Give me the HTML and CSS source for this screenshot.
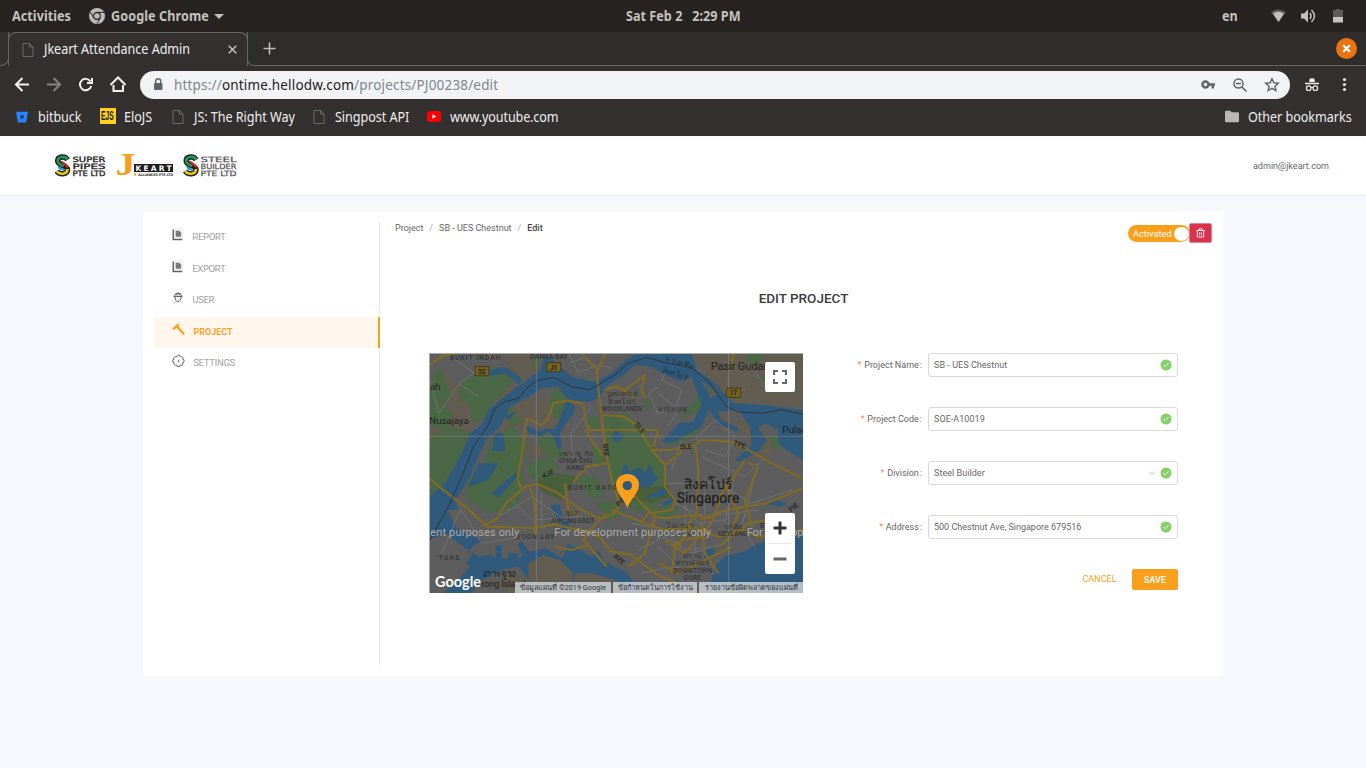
FILE: index.html
```html
<!DOCTYPE html>
<html lang="en">
<head>
<meta charset="utf-8">
<title>Jkeart Attendance Admin</title>
<link rel="stylesheet" href="styles.css">
</head>
<body>
<svg width="0" height="0" class="defs" aria-hidden="true">
  <symbol id="page" viewBox="0 0 12 16"><path d="M1 1.500h6.500L11 5v9.500H1zM7.500 1.500V5H11" fill="none" stroke="#6b6967"/></symbol>
  <symbol id="ok" viewBox="0 0 12 12"><circle cx="6" cy="6" r="5.500" fill="#87d068"/><path d="M3.600 6.100l1.700 1.700 3.100-3.500" fill="none" stroke="#fff"/></symbol>
  <symbol id="doc" viewBox="0 0 12 14"><path d="M1.300 1.500v10h9" fill="none" stroke="#666" stroke-width="1.600"/><path d="M3.500.8h5L10.500 2.800v6.800H3.500z" fill="#fff" stroke="#ddd" stroke-width=".7"/><path d="M4.200 3h3l1.500 1.500v3.800H4.200zM4.500 5.300h4M4.500 6.800h4" fill="#888" stroke="#666" stroke-width=".7"/></symbol>
  <symbol id="snake" viewBox="0 0 18 24"><path d="M13.500 6.800C11 2.300 3.700 3.500 3.700 8c0 5 9.800 4 9.800 8.500 0 5.300-8 5.500-10.800 1.500" fill="none" stroke="#222" stroke-width="5.500"/><path d="M13.500 6.500C11 2.300 3.700 3.500 3.700 8c0 3 3 4 6 5" fill="none" stroke="#1b9a59" stroke-width="2.600"/><path d="M7.500 8c1 2.500 5.500 2.500 6 6.500" fill="none" stroke="#df2525" stroke-width="2"/><path d="M13.500 16c0 5.800-8 6-10.800 2" fill="none" stroke="#e4c91d" stroke-width="2.600"/><path d="M4.500 13.500c1 3 3.500 3 5.500 3" fill="none" stroke="#168fc4" stroke-width="2"/></symbol>
</svg>

<div class="topbar">
  <span class="t-act"><span class="narrow">Activities</span></span>
  <svg class="t-chrome" viewBox="0 0 16 16"><circle cx="8" cy="8" r="8" fill="#bdbbb8"/><circle cx="8" cy="8" r="3.900" fill="#272320"/><circle cx="8" cy="8" r="2.800" fill="#bdbbb8"/><path d="M8 4.300h7M4.800 10L1.400 4.200M11.200 10L8 15.600" stroke="#272320" stroke-width="1"/></svg>
  <span class="t-name"><span class="narrow">Google Chrome</span></span><span class="caret"></span>
  <span class="t-date"><span class="narrow">Sat Feb 2 &nbsp; 2:29 PM</span></span>
  <span class="t-en"><span class="narrow">en</span></span>
  <svg class="t-status" width="76" height="16" viewBox="0 0 76 16"><path d="M1 4Q8-1 16 4L8.500 14z" fill="#5e5b58"/><path d="M3 5.500Q8 2 14 5.500L8.500 14z" fill="#c4c2bf"/><path d="M31 5.500h3l4-4v13l-4-4h-3z" fill="#c4c2bf"/><path d="M40 5q2 3 0 6M41.500 2q6 6 0 12" fill="none" stroke="#c4c2bf" stroke-width="1.500"/><path d="M63 2h3V1h4v1h3v8H63z" fill="#5e5b58"/><path d="M63 9h10v5.500H63z" fill="#c4c2bf"/></svg>
</div>

<div class="tabs">
  <div class="tabline-l"></div>
  <div class="tab"><svg width="12" height="16"><use href="#page"/></svg><span class="tab-title"><span class="narrow">Jkeart Attendance Admin</span></span>
    <svg class="tab-x" width="9" height="9"><path d="M.7.7l7.600 7.600M8.300.7L.7 8.300" stroke="#bbb" stroke-width="1.600"/></svg></div>
  <div class="tabline"><svg width="13" height="13"><path d="M6.500.5v12M.5 6.500h12" stroke="#bbb" stroke-width="1.600"/></svg>
    <svg class="winclose" width="21" height="21"><circle cx="10.500" cy="10.500" r="10.500" fill="#e97411"/><path d="M7.200 7.200l6.600 6.600M13.800 7.200l-6.600 6.600" stroke="#fff" stroke-width="2.200"/></svg></div>
</div>

<div class="toolbar">
  <svg width="126" height="28" viewBox="0 0 126 28" fill="none" stroke="#f3f3f3" stroke-width="2"><path d="M29 13.500H16M22.500 7l-6.500 6.500 6.500 6.500"/><path d="M47 13.500h13M53.500 7l6.500 6.500-6.500 6.500" stroke="#858381"/><path d="M90.500 10.500a5.700 5.700 0 1 0 .7 4.500M92 7v5h-5"/><path d="M113.500 14V20h9.500v-6M110.500 14l7.500-7.500 7.500 7.500"/></svg>
  <div class="omni">
    <svg width="10" height="13"><rect x="1" y="5" width="8.500" height="7" rx="1" fill="#5f6368"/><path d="M2.700 5.500V3.300a2.500 2.500 0 0 1 5 0v2.200" fill="none" stroke="#5f6368" stroke-width="1.400"/></svg>
    <span class="url"><span class="narrow">https://<b>ontime.hellodw.com</b>/projects/PJ00238/edit</span></span>
    <svg class="omni-icons" width="80" height="18" viewBox="0 0 80 18" fill="none" stroke="#5f6368"><circle cx="5.500" cy="8.500" r="3" stroke-width="2.400"/><path d="M8.500 8.500H15M12.800 8.500v4" stroke-width="2.400"/><circle cx="38.500" cy="7.500" r="4.500" stroke-width="1.500"/><path d="M42 11l4.500 4.500M36 7.500h5" stroke-width="1.600"/><path d="M72 2.700l1.800 4.100 4.500.4-3.400 3 1 4.400-3.900-2.300-3.900 2.300 1-4.400-3.400-3 4.500-.4z" stroke-width="1.400"/></svg>
  </div>
  <svg class="incog" width="44" height="16" viewBox="0 0 44 16"><path d="M4 5L5 1l2 .7L9 1l1 4zM0 5.700h14v1.500H0z" fill="#eee"/><circle cx="3.700" cy="11.200" r="2.300" fill="none" stroke="#eee" stroke-width="1.200"/><circle cx="10.300" cy="11.200" r="2.300" fill="none" stroke="#eee" stroke-width="1.200"/><path d="M6 10.500h2" stroke="#eee"/><circle cx="39.500" cy="2.500" r="1.600" fill="#eee"/><circle cx="39.500" cy="7.500" r="1.600" fill="#eee"/><circle cx="39.500" cy="12.500" r="1.600" fill="#eee"/></svg>
</div>

<div class="bookmarks">
  <svg class="bm-bit" width="12" height="12"><path d="M0 .7h12l-1.800 10.800H1.800z" fill="#2684ff"/><path d="M4 4.300h4l-.6 3.500H4.600z" fill="#243b66"/></svg><span class="b1"><span class="narrow">bitbuck</span></span>
  <span class="ejs"><span>EJS</span></span><span class="b2"><span class="narrow">EloJS</span></span>
  <svg class="p3" width="12" height="16"><use href="#page"/></svg><span class="b3"><span class="narrow">JS: The Right Way</span></span>
  <svg class="p4" width="12" height="16"><use href="#page"/></svg><span class="b4"><span class="narrow">Singpost API</span></span>
  <svg class="p5" width="14" height="11"><rect width="14" height="11" rx="3" fill="#f00"/><path d="M5.500 3.300v4.400L9.300 5.500z" fill="#fff"/></svg><span class="b5"><span class="narrow">www.youtube.com</span></span>
  <span class="other"><svg width="14" height="13"><path d="M0 2q0-1.300 1.300-1.300h4L6.700 2.300h6Q14 2.300 14 3.600V11q0 1.300-1.300 1.300H1.300Q0 12.300 0 11z" fill="#bab8b6"/></svg><span class="b6"><span class="narrow">Other bookmarks</span></span></span>
</div>

<header class="header">
  <svg class="logos" width="184" height="28" viewBox="0 0 184 28" font-family="DejaVu Sans">
    <use href="#snake" x="-1" y="1" width="18" height="24"/>
    <g font-size="7.200" fill="#2c2c2c" stroke="#2c2c2c" stroke-width=".35"><text x="17.500" y="10" textLength="33" lengthAdjust="spacingAndGlyphs">SUPER</text><text x="17.500" y="17" textLength="33" lengthAdjust="spacingAndGlyphs">PIPES</text><text x="17.500" y="24" textLength="33" lengthAdjust="spacingAndGlyphs">PTE LTD</text></g>
    <text x="60.500" y="23" font-family="Liberation Serif" font-weight="bold" font-size="31" fill="#f99d1c" textLength="20" lengthAdjust="spacingAndGlyphs">J</text>
    <path d="M79 12h39v8H79z" fill="#1d1d1d"/><text x="80.500" y="18.800" font-size="7.500" font-weight="bold" fill="#fff" textLength="36">KEART</text>
    <circle cx="80" cy="22.500" r="1.300" fill="#f99d1c"/><text x="83" y="24" font-size="3.400" font-weight="bold" fill="#333" textLength="35">ALLIANCES PTE LTD</text>
    <use href="#snake" x="127.500" y="1" width="18" height="24"/>
    <g font-size="7.200" fill="#555" stroke="#555" stroke-width=".25"><text x="145.500" y="10" textLength="36" lengthAdjust="spacingAndGlyphs">STEEL</text><text x="145.500" y="17" textLength="36" lengthAdjust="spacingAndGlyphs">BUILDER</text><text x="145.500" y="24" textLength="36" lengthAdjust="spacingAndGlyphs">PTE LTD</text></g>
  </svg>
  <span>admin@jkeart.com</span>
</header>

<main class="card">
  <nav class="menu">
    <div class="item"><svg width="12" height="14"><use href="#doc"/></svg>REPORT</div>
    <div class="item"><svg width="12" height="14"><use href="#doc"/></svg>EXPORT</div>
    <div class="item"><svg width="12" height="14" fill="none" stroke="#666" stroke-width="1"><path d="M1.500 5.500h9M2.500 5.200Q2.500 2 6 2t3.500 3.200M6 1.500v3M4.300 2.500v2M7.700 2.500v2M3 6q0 4.500 3 4.500T9 6"/><path d="M1 12.500l3-2M11 12.500l-3-2" stroke="#ccc"/></svg>USER</div>
    <div class="item active"><svg width="13" height="14"><path d="M.3 5.500L6 .5l1.700.9L6.300 3l6.500 7.500-1.500 1.500-6.600-7.300L2 7z" fill="#faa01e"/></svg>PROJECT</div>
    <div class="item"><svg width="13" height="14" fill="none" stroke="#666"><path d="M5.300 1.500L6.500.9l1.200.6.5 1.300 1.500-.5 1.300 1.500-.5 1.200 1.500.8v2.200l-1.500.7.5 1.500L9.500 11.500l-1.300-.5-.5 1.500H5.300l-.5-1.500-1.500.5-1.500-1.500.5-1.300-1.500-.7V5.800L2.300 5l-.5-1.200 1.500-1.500 1.500.5z"/><circle cx="6.500" cy="7" r=".6"/></svg>SETTINGS</div>
  </nav>
  <section class="content">
    <div class="crumbrow">
      <div class="crumbs"><span>Project</span><i>/</i><span>SB - UES Chestnut</span><i>/</i><strong>Edit</strong></div>
      <div class="actions"><span class="switch">Activated<em></em></span>
        <button class="trash"><svg width="9" height="10" fill="none" stroke="#fff" stroke-width=".9"><path d="M.3 2.500h8.400M3 2.300V.8h3v1.500M1.300 2.800V9h6.400V2.800M3.600 4.300v3M5.400 4.300v3"/></svg></button></div>
    </div>
    <h1>EDIT PROJECT</h1>
    <div class="body">
      <div class="map">
        <svg class="mapart" width="374" height="240" viewBox="12 9 1122 720" preserveAspectRatio="none">
          <rect width="1140" height="740" fill="#5d5d5d"/>
          <g fill="#625c51">
            <path d="M12 100L50 60l90 90 20 60-60 80-88 60zM190 130l60-30 30 20-60 40zM230 12h90l20 50-40 30-50-40zM260 150l60 0 100-20 30 20-30 90-40-50-80 20-50 90-40-10zM340 180l50-30 30 70-60 20zM800 12h334v160l-150-15-70 10-60-80zM860 200l30-20 40 50-20 20zM920 220l60-10 70 70-10 50-50-20-30-60zM300 290l60-10 20 30-60 20zM160 12h70l-20 30z"/>
          </g>
          <g fill="#4a6846">
            <path d="M12 90l30-40 20 50 20 40-30 30 30 20-20 50-50-10zM110 90l50-20 40-20 50 5 20 30-30 40-40 40-10 40-50 10-10-60-30 0zM12 260l60-30 70 20-20 50-40 80-70 60zM200 260l60-30 50 50-20 70-60 50-60-30zM220 170l30-15 40 60-30 20zM380 120l40 0 20 30-40 60-30-30zM310 340l60-20 30 30-50 50-40-20zM470 90l15-15 12 25-15 5zM490 200l30 0 5 50-35-20zM540 200l60-15 60 60 30 50 30 60 10 60-40 60-50 10-50-30-30-40-20-110zM650 160l40-20-20 40zM330 250l60 10 30 60-50 10zM670 480l80-20 10 30-70 20zM720 260l60-15 60-30-30 40-80 35zM760 210l50-60 20-40 30 10-20 50zM960 12h60l-30 35-20-10zM1000 90l60-40v70zM1030 260l25-5 10 40-20 5zM1070 200l60 10v40l-60-30zM900 620l60-10 60-40 50-10-40 30-80 30-30 20z"/>
            <path d="M130 380l80-40 80 10 10 60-30 60-80 20-70-50zM500 290l30 5 10 40-30 10zM510 460l50-10 40 40-50 20zM450 390l50-20 40 50-30 30zM12 370l70-10-70 70zM320 20l30 10-20 30z"/>
          </g>
          <path fill="#47603a" d="M330 400l70-30 55 10-25 40-20 30-50-20zM640 390l40 20 50-5 10 35-60 20-60-10z"/>
          <g fill="#305a7c">
            <path d="M12 520L12 440 60 400 110 310 135 250 170 225 190 180 225 150 270 115 300 95 345 60 362 12 400 45 440 80 510 95 560 70 610 25 640 9H800L815 60 870 100 925 160 1010 165 1134 180V330L1085 300 1060 280 1060 240 1020 220 985 245 940 180 880 185 830 160 880 130 840 100 800 80 770 95 720 75 680 50 630 45 590 80 540 110 525 145 490 155 430 150 400 110 350 115 310 140 255 170 225 230 190 260 160 320 130 390 90 450 100 480 60 480z"/>
            <path d="M190 60l50-10 50 35-5 20-45-35-45 8zM225 185l20 10 25-10-15 25-25-15zM205 250l30 15v40l-30-5zM300 225l45 20 25-5-20 20-40-10zM425 150l25 20-5 25-20 20-20 35 5 40-8 10-25-50-35-10 50-5 15-35zM210 250h25l5 50-40 5zM160 340l60 0-30 50-60 20zM200 430l70-60 10 8-60 65zM570 240l30 20-25 20 20 15-35-30zM590 370l10-30 15 25 30-15 15 20 15-30 10 30 15 15-30 30-50-10zM800 80l25 10 25 35 10 35-30 70-45 25-45 25-30-5 50-55 45-5 25-50zM860 150l30 60 50 25 0 10-60-20-30-50zM975 245l10-35 40 60-20 30-60 35-15-5 50-45zM375 465h30l5 30 25 30-20 20-25-55zM660 445l50-30 20 10-20 15zM710 460l35-20 5 10-30 20zM840 595l25-5 5 30-35 10zM1015 460l40-10 30 10-20 10z"/>
            <path d="M12 500l50 0 30 40 80 30-40 30 30 20 50-10-5-20 20-5 20 25 40 0-10-30 15-5 20 30 50-10 50 30 80 30 70 40 50 50 10 14H350l-10-60-30-10-30-40-50 10-60 30-40 50H40l60-50 35-40-60-30-20-60-43-20z"/>
            <path d="M12 450l50 20 30 60 40 30-10 20-60-30-50 20z"/>
            <path d="M850 729l20-80 30-30 60-15 40-25 100-20 34-5v175z"/>
            <path d="M430 580l70 40 20-20 20 35 60 30 40 45-30 19h-90l-40-60-70-40z"/>
          </g>
          <g fill="#625c51"><path d="M310 640l45-25 50 15 40 40-10 59H260l-60-19 40-30 30-10 40 20zM450 670l50 0 70 20 30 30-10 9h-150z"/></g>
          <g fill="#5d5d5d"><path d="M200 580h12v40h-12zM230 590h20v35h-20zM280 585l12 30-12 15zM12 580l50-30 40 30 40 30-30 50-40-10-50 50z"/></g>
          <g fill="none" stroke="#717171" stroke-width="3">
            <path d="M90 30l60 40M12 80l30 110 60-90 60-40M190 12l20 30M100 100l60 40M430 9l30 60 60-25 40 10M430 40l60-20M500 170l-60 80v70l60 60M700 110l-30 20 30 60 50-10 20-60-60-30 10-20M700 130l60 50-30 50M740 360l30-90M810 270l60-60 60 50-30 60-60-20M910 9v110h50M970 40l60 80M830 320l130 60 60-60M720 400h160l100 60 120-40M750 460l90 40 160-20M780 400v130M840 380v140M930 370l-30 150M1000 340l-50 190 40 60"/>
            <path d="M50 610l60-140M110 480l60 100 130-20M220 500l100-60 100 70M260 450l60 60 150-10M350 430v100l80-20M620 520l100 20 60 60 80-10M640 600l80-40 80 50 100-30M650 670l90-20 130 20M810 550v80M780 470l40 50 80-10M700 590l60 60"/>
          </g>
          <g fill="none" stroke="#806a25" stroke-width="6.500" stroke-linejoin="round">
            <path d="M12 45l45-30h30M470 12l45 45 5 60 15 130 10 70 20 90 20 60-20 25-40 15-60-30-70-50-60-25-30 5-60 50-30 50-40 20M305 205l-12 90-15 95 10 25M305 205l45 20 20-20 15-45 45-8 45 10 8 60 15 20M520 60l20-50M485 240l215 0M535 195l60 5 40 25 45 75 40 45v65l30 40-10 30-70 10-25 30M680 300h60l70-15 20-15 90 5 60 30 60 35 90 45M540 120l30-10 30 10 60-45-10 45 10 25M570 105l60 40M700 240l-15 50M480 240l55 80M720 345l50-40M810 285l10 70-5 130-40 60M990 345l-20-5M1000 350l-40 100 20 80M1134 415l-110 45-120 20-80 30M925 12l-10 50"/>
            <path d="M12 385l75 60 40 30 60 55 140 4 60-10 100 20 40 20 30 40 60 10 80 60 110 50 60 10 90-20 60 20M445 395l40-45 60-10M560 480l100 40 60 20 80-10 80 30 70-20 50 20 134-20M590 400l50 50 50 50 30 5 80-10 60 10M420 400l10 80 30 15M545 490l-50 50-20 30 70 80M330 560v-100l-15-50M390 590l50 10 50-15M690 500l-30 110-50 40M800 530l-50 70-10 70M830 520l10 90 40 60M740 590l30-20 60-10 40-60 20-70 70-100M880 590l90-70 60-10M700 640l60 30 60-30 100-50M720 570l60 40 40-50M900 400l40 90-20 50"/>
          </g>
          <path fill="none" stroke="#2d363d" stroke-width="3" d="M12 575L75 460 112 375 145 290 190 225 210 175 240 155 280 145 305 115 340 90 388 83 440 110 495 119 570 75 610 40 665 22 720 38 800 53 850 95 905 170 940 186 1010 190 1070 179 1134 193"/>
          <path d="M334 9V729M911 9V729M12 259H1134" stroke="#808080" stroke-width="2"/>
          <g fill="#74621f" stroke="#493d16" stroke-width="3"><path d="M150 50h42v27h-42zM365 38h42v27h-42zM904 115h43v27h-43z"/></g>
          <g class="roadno"><text x="171" y="71">52</text><text x="386" y="59">J1</text><text x="925" y="136">17</text></g>
          <g class="places">
            <text x="75" y="30" textLength="151">BUKIT INDAH</text><text x="316" y="28" textLength="112">DANGA BAY</text>
            <text x="530" y="182" textLength="122">WOODLANDS</text><text x="700" y="187" textLength="86">YISHUN</text>
            <text x="402" y="338" textLength="101">CHOA CHU</text><text x="425" y="360" textLength="54">KANG</text><text x="402" y="318" textLength="101" lengthAdjust="spacingAndGlyphs">เขา ชู กัง</text>
            <text x="543" y="139" textLength="95" lengthAdjust="spacingAndGlyphs">วูดแลนด์</text><text x="548" y="163" textLength="86" lengthAdjust="spacingAndGlyphs">สิงคโปร์</text>
            <text x="429" y="420" textLength="163">BUKIT BATOK</text><text x="376" y="518" textLength="132">JURONG EAST</text><text x="422" y="495">จูรง</text>
            <text x="272" y="567" textLength="116">BOON LAY</text><text x="41" y="630" textLength="62">TUAS</text>
            <text x="723" y="535" textLength="82" lengthAdjust="spacingAndGlyphs">โนเวนา</text><text x="738" y="558" class="sm">NOVENA</text><text x="900" y="537" textLength="52" lengthAdjust="spacingAndGlyphs">เกลัง</text><text x="880" y="558" textLength="88">GEYLANG</text><text x="1005" y="534">B</text>
            <text x="773" y="625" textLength="58" lengthAdjust="spacingAndGlyphs">ดาวน์</text><text x="749" y="646" textLength="107" lengthAdjust="spacingAndGlyphs">ทาวน์ดอร์</text><text x="744" y="668" textLength="117">DOWNTOWN</text><text x="776" y="689" textLength="52">CORE</text>
          </g>
          <g class="roads"><text x="765" y="298" transform="rotate(-3 765 298)">SLE</text><text x="924" y="285" transform="rotate(18 924 285)">TPE</text><text x="628" y="223" transform="rotate(55 628 223)">SLE</text><text x="534" y="282" transform="rotate(85 534 282)">BKE</text><text x="356" y="386" transform="rotate(-27 356 386)">KJE</text><text x="563" y="621" transform="rotate(40 563 621)">AYE</text><text x="1098" y="487" transform="rotate(-38 1098 487)">PIE</text><text x="582" y="470" transform="rotate(-45 582 470)">PIE</text></g>
          <g class="strait"><text x="720" y="30" transform="rotate(20 720 30)">มาเลเซีย</text><text x="712" y="65" transform="rotate(20 712 65)">สิงคโปร์</text></g>
          <g class="towns"><text x="15" y="120">ah</text><text x="13" y="223" textLength="118">Nusajaya</text><text x="857" y="61" textLength="195" class="big">Pasir Gudang</text><text x="1072" y="248">Pulau</text><text x="173" y="682" textLength="101">เกาะจูรง</text><text x="168" y="710" textLength="134">rong Island</text></g>
          <g class="city"><text x="776" y="416" textLength="146" lengthAdjust="spacingAndGlyphs">สิงคโปร์</text><text x="755" y="459" textLength="188" lengthAdjust="spacingAndGlyphs">Singapore</text></g>
          <g class="dev"><text x="16" y="558" textLength="267">ent purposes only</text><text x="388" y="558" textLength="470">For development purposes only</text><text x="965" y="558">For development purposes only</text></g>
          <text x="30" y="711" class="google" textLength="138" lengthAdjust="spacingAndGlyphs">Google</text>
          <path d="M607 474C601 450 573 430 573 404a34.500 32 0 0 1 69 0C642 430 613 450 607 474z" fill="#fa9f1c"/><circle cx="607" cy="407" r="14" fill="#305a7c"/>
        </svg>
        <div class="mapfull"><svg width="14" height="14" fill="none" stroke="#666" stroke-width="2"><path d="M1 5V1h4M9 1h4v4M13 9v4H9M5 13H1V9"/></svg></div>
        <div class="mapzoom"><svg width="30" height="61"><path d="M15 8.500v13M8.500 15h13" stroke="#333" stroke-width="3"/><path d="M4 30.500h22" stroke="#e6e6e6"/><path d="M8.500 46h13" stroke="#666" stroke-width="3"/></svg></div>
        <div class="mapfoot"><span class="f1">ข้อมูลแผนที่ ©2019 Google</span><span class="f2">ข้อกำหนดในการใช้งาน</span><span class="f3">รายงานข้อผิดพลาดของแผนที่</span></div>
      </div>
      <form class="form">
        <label><span><b>*</b> Project Name<i>:</i></span></label><div class="input">SB - UES Chestnut<svg width="12" height="12"><use href="#ok"/></svg></div>
        <label><span><b>*</b> Project Code<i>:</i></span></label><div class="input">SOE-A10019<svg width="12" height="12"><use href="#ok"/></svg></div>
        <label><span><b>*</b> Division<i>:</i></span></label><div class="input">Steel Builder<svg width="25" height="12"><path d="M2.300 4.800l2.700 2.700 2.700-2.700" fill="none" stroke="#bbb"/><use href="#ok" x="13" width="12" height="12"/></svg></div>
        <label><span><b>*</b> Address<i>:</i></span></label><div class="input last">500 Chestnut Ave, Singapore 679516<svg width="12" height="12"><use href="#ok"/></svg></div>
        <div class="buttons"><span class="cancel">CANCEL</span><span class="save">SAVE</span></div>
      </form>
    </div>
  </section>
</main>
</body>
</html>
```
FILE: styles.css
```css
* { box-sizing: border-box; }
body { margin: 0; height: 768px; overflow: hidden; background: #f7f8fd; font-family: Roboto, sans-serif; font-size: 9px; color: #666; }
svg { display: block; flex: none; }
.defs { position: absolute; }
.topbar, .tabs, .toolbar, .bookmarks { font-family: "Noto Sans", sans-serif; display: flex; align-items: center; white-space: nowrap; }
/* condensed look for the desktop's interface font */
.narrow { display: inline-block; transform: scaleX(.9); transform-origin: left center; }
.topbar { height: 32px; background: #272320; color: #c4c2bf; font-weight: 700; font-size: 14px; padding-left: 12px; }
.topbar > span { margin-top: -2px; }
.t-act { width: 77px; letter-spacing: .05px; }
.t-chrome { width: 16px; height: 16px; }
.t-name { width: 98px; margin-left: 6px; letter-spacing: .1px; }
.topbar > .caret { border: 5px solid transparent; border-top-color: #c4c2bf; border-bottom: 0; margin: 0 0 0 5px; }
.t-date { margin-left: 402px; width: 117px; letter-spacing: .03px; }
.t-en { margin-left: 479px; width: 48px; }
.tabs { height: 34px; background: #2e2d2b; align-items: stretch; }
.tabline-l { width: 9px; background: #34302f; border-right: 1px solid #666; border-bottom: 1px solid #666; border-radius: 0 0 8px 0; }
.tab { width: 240px; margin-left: -1px; background: #34302f; border: 1px solid #666; border-width: 1px 1px 0 1px; border-radius: 8px 8px 0 0; display: flex; align-items: center; padding: 0 10px 0 13px; }
.tab-title { margin-left: 10px; width: 150px; color: #eee; font-size: 14px; letter-spacing: -.05px; margin-top: -3px; }
.tab-x { margin-left: auto; }
.tabline { flex: 1; margin-left: -1px; border-bottom: 1px solid #666; border-left: 1px solid #666; border-radius: 0 0 0 7px; display: flex; align-items: center; justify-content: space-between; padding: 0 9px 0 15px; }
.toolbar { height: 37px; background: #34302f; }
.omni { width: 1150px; height: 28px; margin-left: 14px; border-radius: 14px; background: #f1f3f5; display: flex; align-items: center; padding: 0 10px 0 13px; }
.url { margin: -2px 0 0 11px; width: 340px; font-size: 15px; letter-spacing: .19px; color: #80868b; }
.url b { color: #222; font-weight: 400; }
.omni-icons { margin-left: auto; }
.incog { margin-left: 15px; }
.bookmarks { height: 33px; background: #34302f; color: #eee; font-size: 14px; padding: 0 14px 6px 16px; letter-spacing: -.05px; }
.bookmarks > span { margin-top: -1px; }
.b1 { width: 46px; margin-left: 10px; }
.ejs { margin-left: 16px; width: 16px; height: 16px; background: #ffd11c; color: #222; font: bold 13px/16px "Liberation Sans", sans-serif; letter-spacing: 0; }
.ejs span { display: inline-block; transform: scaleX(.52); transform-origin: left center; padding-left: 2px; }
.b2 { width: 31px; margin-left: 8px; }
.p3 { margin-left: 17px; }
.b3 { width: 103px; margin-left: 10px; }
.p4 { margin-left: 16px; }
.b4 { width: 76px; margin-left: 10px; }
.p5 { margin-left: 16px; }
.b5 { margin-left: 9px; letter-spacing: -.15px; }
.other { margin-left: auto; display: flex; align-items: center; gap: 9px; }
.b6 { width: 104px; }
.header { height: 60px; background: #fff; border-bottom: 1px solid #e8e9ee; display: flex; align-items: center; justify-content: space-between; padding: 0 37px 0 55px; }
.header span { letter-spacing: .02px; }
.card { display: flex; margin: 15px 0 0 143px; width: 1080px; height: 465px; background: #fff; padding: 11px; border-radius: 2px; }
.menu { width: 226px; flex: none; border-right: 1px solid #e8e8e8; height: 443px; }
.item { height: 31.500px; display: flex; align-items: center; padding: 0 0 1px 18px; color: #8c8c8c; gap: 8.500px; font-weight: 300; -webkit-text-stroke: .15px #8c8c8c; }
.item svg { margin-top: -4px; }
.item.active { width: 226px; padding-bottom: 0; color: #fa9f1c; font-weight: 600; background: #fff6ec; border-right: 2px solid #fa9f1c; -webkit-text-stroke: 0; }
.content { flex: none; width: 832px; }
.crumbrow { display: flex; justify-content: space-between; height: 21px; padding-left: 15px; }
.crumbs { line-height: 13px; white-space: nowrap; }
.crumbs i { font-style: normal; color: #aaa; margin: 0 6px; }
.crumbs strong { font-weight: 500; color: #444; }
.actions { display: flex; align-items: center; }
.switch { width: 62px; height: 17px; margin-top: 2px; border-radius: 9px; background: #fa9f1c; color: #fff; padding: 0 1px 0 5px; display: flex; align-items: center; justify-content: space-between; letter-spacing: .1px; }
.switch em { width: 15px; height: 14px; border-radius: 50%; background: #fff; }
.trash { width: 23px; height: 20px; margin-left: -1px; padding: 0; border: 1px solid #e67f8d; border-radius: 2px; background: #d9324d; display: flex; align-items: center; justify-content: center; }
h1 { margin: 45px 0 0; width: 847px; font-size: 13.500px; line-height: 20px; font-weight: 500; color: #3c3c3c; text-align: center; }
.body { display: flex; margin: 45px 0 0 49px; }
.map { position: relative; width: 374px; height: 240px; overflow: hidden; border: solid #aaa; border-width: 1px 0 0 1px; }
.mapart { margin: -1px 0 0 -1px; font-family: Roboto, "Noto Sans", sans-serif; clip-path: inset(1px 0 0 1px); }
.roadno { font-size: 19px; font-weight: 700; fill: #222; text-anchor: middle; }
.places { font-size: 20px; font-weight: 500; fill: #363636; }
.places .sm { font-size: 17px; }
.roads { font-size: 21px; font-weight: 500; fill: #252525; }
.strait { font-size: 22px; fill: #24303b; }
.towns { font-size: 29px; fill: #222; }
.towns .big { font-size: 34px; }
.city { font-size: 42px; font-weight: 400; fill: #1e1e1e; stroke: #1e1e1e; stroke-width: .6px; }
.dev { font-size: 33px; fill: #aaa; }
.google { font-family: Lato, sans-serif; font-size: 46px; font-weight: 700; fill: #fff; }
.mapfull, .mapzoom { position: absolute; left: 335px; width: 30px; background: #fff; border-radius: 2px; }
.mapfull { top: 8px; height: 30px; display: flex; align-items: center; justify-content: center; }
.mapzoom { top: 159px; height: 61px; }
.mapfoot { position: absolute; right: 0; bottom: 0; height: 11px; display: flex; gap: 2px; font-size: 7.300px; line-height: 11px; color: #333; white-space: nowrap; text-align: center; }
.mapfoot span { background: rgba(200, 207, 213, .85); }
.f1 { width: 96px; }
.f2 { width: 84px; }
.f3 { width: 104px; }
.form { display: grid; grid-template-columns: 119px 250px; grid-auto-rows: 24px; row-gap: 30px; column-gap: 6px; }
.form label { display: flex; align-items: center; justify-content: flex-end; white-space: nowrap; }
.form label b { color: #ff8a55; font-weight: 400; margin-right: .5px; }
.form label i { font-style: normal; margin-left: 1px; }
.input { display: flex; align-items: center; justify-content: space-between; border: 1px solid #d9d9d9; border-radius: 3px; padding: 0 5px; letter-spacing: .05px; }
.input.last { letter-spacing: 0; }
.buttons { grid-column: 2; display: flex; align-items: center; justify-content: flex-end; gap: 15.500px; height: 21px; color: #fa9f1c; }
.cancel { margin-top: -1px; }
.save { width: 46px; height: 21px; line-height: 22px; text-align: center; background: #fa9f1c; color: #fff; border-radius: 2px; font-weight: 500; }
```
